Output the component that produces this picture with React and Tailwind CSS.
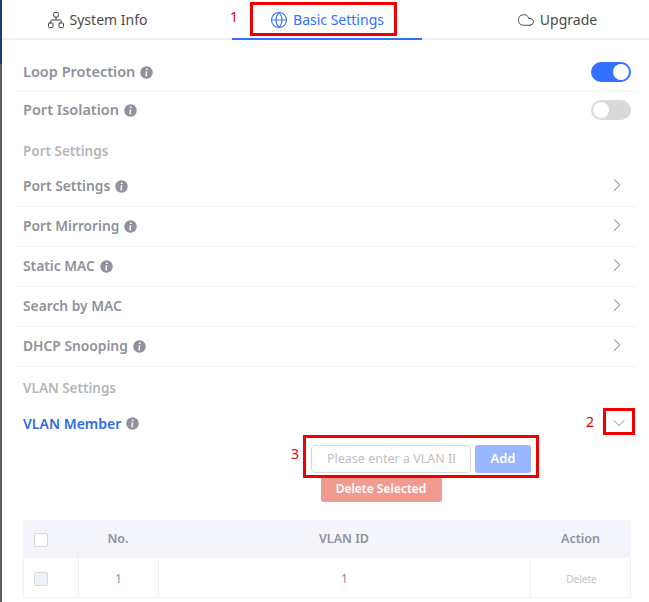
import React from "react";
import { ChevronRight, ChevronDown, Globe, Cloud, Network } from "lucide-react";

const Info = () => (
  <svg width="13" height="13" viewBox="0 0 13 13" className="shrink-0">
    <circle cx="6.5" cy="6.5" r="6.25" fill="#8f929b" />
    <rect x="5.9" y="2.4" width="1.8" height="1.7" rx=".6" fill="#fff" />
    <path d="M5.4 5.4h2l-.8 4.2h.9l-.1.6H5.2l.7-4.2h-.6z" fill="#fff" />
  </svg>
);

const Label = ({ children, info = true, color = "text-[#8f929b]", size = "text-[13.8px]" }) => (
  <div className={`flex items-center gap-[5px] font-semibold ${size} ${color}`}>
    <span>{children}</span>
    {info && <Info />}
  </div>
);

const Toggle = ({ on }) => (
  <div className={`flex h-[20px] w-[40px] items-center rounded-full px-[2px] ${on ? "justify-end bg-[#3370ff]" : "justify-start bg-[#d9d9d9]"}`}>
    <div className="h-[16px] w-[16px] rounded-full bg-white" />
  </div>
);

const ToggleRow = ({ label, on, border, h }) => (
  <div className={`flex items-center justify-between pl-[6px] pr-[6px] ${h} ${border ? "border-b border-[#f0f2f5]" : ""}`}>
    <Label size="text-[14.5px]">{label}</Label>
    <Toggle on={on} />
  </div>
);

const LinkRow = ({ label, info = true, border = true }) => (
  <div className={`flex h-[40px] items-center justify-between pl-[6px] pr-[9px] ${border ? "border-b border-[#f0f2f8]" : ""}`}>
    <Label info={info}>{label}</Label>
    <ChevronRight size={22} strokeWidth={1.1} className="-mt-[3px] text-[#8a8a8a]" />
  </div>
);

const Section = ({ children, h }) => (
  <div className={`flex items-center pl-[6px] text-[13.5px] font-semibold text-[#b4b6bc] ${h}`}>{children}</div>
);

const Check = ({ filled }) => (
  <div className={`h-[14px] w-[14px] rounded-[2px] border border-[#d9d9d9] ${filled ? "bg-[#edf1fb]" : "bg-white"}`} />
);

const Annot = ({ className, children }) => (
  <span className={`absolute text-[14px] leading-none text-[#e00000] ${className}`}>{children}</span>
);

const Tab = ({ className, children }) => (
  <div className={`flex h-[40px] items-center justify-center gap-[5px] border-b-2 pt-[1px] text-[14px] ${className}`}>{children}</div>
);

export default function App() {
  return (
    <div className="relative flex h-[602px] w-[649px] overflow-hidden bg-white font-['Noto_Sans',sans-serif]">
      <div className="flex w-[2px] shrink-0 flex-col">
        <div className="h-[64px] bg-[#1d3a78]" />
        <div className="flex-1 bg-[#5c5c5c]" />
      </div>
      <div className="min-w-0 flex-1">
        <div className="flex">
          <Tab className="w-[230px] border-[#eef0f4] pr-[40px] text-[#4a4a4a]">
            <Network size={18} strokeWidth={1.3} />
            System Info
          </Tab>
          <Tab className="w-[190px] border-[#3370ff] text-[#3370ff]">
            <Globe size={18} strokeWidth={1.4} />
            Basic Settings
          </Tab>
          <Tab className="w-[227px] border-[#eef0f4] pl-[43px] text-[#4a4a4a]">
            <Cloud size={18} strokeWidth={1.3} />
            Upgrade
          </Tab>
        </div>
        <div className="ml-[15px] w-[620px]">
          <ToggleRow label="Loop Protection" on border h="h-[52px] pt-[13px]" />
          <ToggleRow label="Port Isolation" h="h-[36px]" />
          <Section h="h-[43px] pt-[4px]">Port Settings</Section>
          <div className="-mt-[4px]">
            <LinkRow label="Port Settings" />
            <LinkRow label="Port Mirroring" />
            <LinkRow label="Static MAC" />
            <LinkRow label="Search by MAC" info={false} />
            <LinkRow label="DHCP Snooping" />
          </div>
          <Section h="h-[42px]">VLAN Settings</Section>
          <div className="flex h-[28px] items-center justify-between pl-[6px] pr-[8px]">
            <Label color="text-[#2e6be6]" size="text-[14px]">VLAN Member</Label>
            <ChevronDown size={20} strokeWidth={1.1} className="text-[#8a8a8a]" />
          </div>
          <div className="mt-[8px] flex flex-col items-center pl-[108px]">
            <div className="flex gap-[4px] pl-[80px]">
              <div className="flex h-[28px] w-[160px] items-center overflow-hidden rounded-[4px] border border-[#d9d9d9] pl-[15px] pt-[1px] text-[12.5px] whitespace-nowrap text-[#bfbfbf]">
                <span className="block w-[128px] overflow-hidden">Please enter a VLAN ID</span>
              </div>
              <div className="flex h-[28px] w-[56px] items-center justify-center rounded-[3px] bg-[#99b7ff] text-[13px] font-semibold text-white">Add</div>
            </div>
            <div className="mt-[3px] flex h-[26px] w-[121px] items-center justify-center rounded-[3px] bg-[#f19b90] text-[12px] font-semibold text-white">Delete Selected</div>
          </div>
          <div className="mt-[18px] ml-[6px] w-[608px] text-[#8f929b]">
            <div className="grid h-[38px] grid-cols-[55px_80px_372px_101px] items-center bg-[#f4f5fa] text-center text-[12.5px] font-semibold">
              <div className="flex justify-start border-r border-[#f0f1f7] py-[12px] pt-[13px] pl-[11px]"><Check /></div>
              <div>No.</div>
              <div>VLAN ID</div>
              <div>Action</div>
            </div>
            <div className="grid h-[40px] grid-cols-[55px_80px_372px_101px] border border-t-0 border-[#f0f1f7] text-center text-[12px]">
              <div className="flex items-center justify-start border-r border-[#f0f1f7] pt-[2px] pl-[10px]"><Check filled /></div>
              <div className="flex items-center justify-center border-r border-[#f0f1f7] pt-[2px]">1</div>
              <div className="flex items-center justify-center border-r border-[#f0f1f7] pt-[2px]">1</div>
              <div className="flex items-center justify-center pt-[3px] text-[10px] text-[#c4c4c4]">Delete</div>
            </div>
          </div>
        </div>
      </div>

      <div className="absolute top-[2px] left-[250px] h-[34px] w-[147px] border-[3px] border-[#f00000]" />
      <div className="absolute top-[408px] left-[603px] h-[27px] w-[32px] border-[3px] border-[#f00000]" />
      <div className="absolute top-[435px] left-[303px] h-[43px] w-[236px] border-[3px] border-[#f00000]" />
      <Annot className="top-[10px] left-[230px]">1</Annot>
      <Annot className="top-[415px] left-[586px]">2</Annot>
      <Annot className="top-[447px] left-[291px]">3</Annot>
    </div>
  );
}
